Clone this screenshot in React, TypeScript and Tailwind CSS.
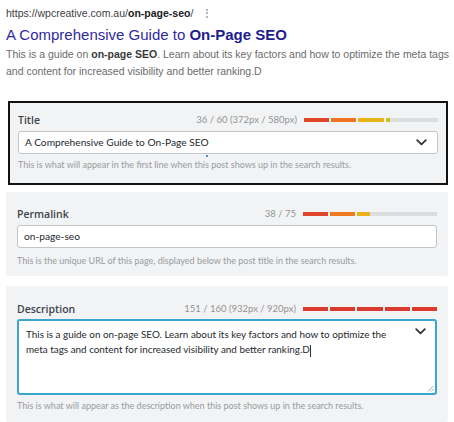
import React from "react";

function SegBar({ fill, colors }: { fill: number; colors: string[] }) {
  // fill is a width in px out of the 134px track
  return (
    <div className="relative w-[134px] h-[4px] bg-[#dcdddf]">
      <div className="absolute left-0 top-0 h-full overflow-hidden bg-[#f2f3f4]" style={{ width: fill }}>
        <div className="flex gap-[2px] h-full w-[134px]">
          {colors.map((c, i) => (
            <div key={i} className="h-full w-[25.2px] shrink-0" style={{ background: c }} />
          ))}
        </div>
      </div>
    </div>
  );
}

function Chevron() {
  return (
    <svg width="11" height="7" viewBox="0 0 11 7" fill="none" stroke="#2c3338" strokeWidth="1.8" strokeLinecap="round" strokeLinejoin="round">
      <path d="M1.2 1.2 5.5 5.3 9.8 1.2" />
    </svg>
  );
}

export default function App() {
  const titleColors = ["#e2452a", "#ef7421", "#e6b318", "#c8c21d", "#dcdddf"];
  const permaColors = ["#e0462b", "#f07a20", "#eab21b", "#dcdddf", "#dcdddf"];
  const descColors = ["#db3b2f", "#db3b2f", "#db3b2f", "#db3b2f", "#db3b2f"];

  return (
    <div className="w-[454px] h-[422px] bg-white overflow-hidden font-['Lato',sans-serif]">
      {/* search preview */}
      <div className="pl-[6px] pt-[6px] font-['Liberation_Sans',Arial,sans-serif]">
        <div className="flex items-center gap-[13px] text-[10.5px] leading-[14px] text-[#3c4043]">
          <span>
            https://wpcreative.com.au/<b className="text-[#202124]">on-page-seo</b>/
          </span>
          <span className="flex flex-col gap-[1.5px]">
            <i className="block w-[2px] h-[2px] rounded-full bg-[#9aa0a6]" />
            <i className="block w-[2px] h-[2px] rounded-full bg-[#9aa0a6]" />
            <i className="block w-[2px] h-[2px] rounded-full bg-[#9aa0a6]" />
          </span>
        </div>
        <div className="mt-[4px] text-[15px] leading-[22px] text-[#2f2a9e]">
          A Comprehensive Guide to <b className="text-[#221d8e]">On-Page SEO</b>
        </div>
        <p className="text-[10.5px] leading-[17px] text-[#6b6b6b] pr-[4px]">
          This is a guide on <b className="text-[#3a3a3a]">on-page SEO</b>. Learn about its key factors and how to optimize the meta tags and content for increased visibility and better ranking.D
        </p>
      </div>

      {/* Title */}
      <div className="ml-[8px] mr-[6px] mt-[21px] border-2 border-[#111] bg-[#f2f3f4] px-[8px] pt-[10px] pb-[11px]">
        <div className="flex items-end justify-between">
          <span className="font-['Open_Sans',sans-serif] text-[10.5px] font-semibold leading-[14px] text-[#3c434a]">Title</span>
          <div className="flex items-center gap-[7px]">
            <span className="text-[9.5px] leading-[14px] text-[#939393]">36 / 60 (372px / 580px)</span>
            <SegBar fill={86} colors={titleColors} />
          </div>
        </div>
        <div className="relative mt-[4px] h-[23px] flex items-center justify-between rounded-[3px] border border-[#c3c4c7] bg-white pl-[6px] pr-[10px]">
          <span className="text-[10.2px] text-[#23282d]">A Comprehensive Guide to On-Page SEO</span>
          <Chevron />
          <span className="absolute left-[187px] top-[23px] w-[2px] h-[2px] rounded-full bg-[#2f5fd0]" />
        </div>
        <p className="mt-[4px] text-[9px] leading-[14px] text-[#989ca1]">
          This is what will appear in the first line when this post shows up in the search results.
        </p>
      </div>

      {/* Permalink */}
      <div className="ml-[6px] mr-[6px] mt-[7px] rounded-[2px] bg-[#f2f3f4] px-[11px] pt-[15px] pb-[8px]">
        <div className="flex items-end justify-between">
          <span className="font-['Open_Sans',sans-serif] text-[10.5px] font-semibold leading-[14px] text-[#3c434a]">Permalink</span>
          <div className="flex items-center gap-[7px]">
            <span className="text-[9.5px] leading-[14px] text-[#939393]">38 / 75</span>
            <SegBar fill={67} colors={permaColors} />
          </div>
        </div>
        <div className="mt-[4px] h-[23px] flex items-center rounded-[3px] border border-[#c3c4c7] bg-white pl-[6px]">
          <span className="text-[10.2px] text-[#23282d]">on-page-seo</span>
        </div>
        <p className="mt-[6px] text-[9px] leading-[14px] text-[#989ca1]">
          This is the unique URL of this page, displayed below the post title in the search results.
        </p>
      </div>

      {/* Description */}
      <div className="ml-[6px] mr-[6px] mt-[10px] rounded-[2px] bg-[#f2f3f4] px-[11px] pt-[16px] pb-[9px]">
        <div className="flex items-end justify-between">
          <span className="font-['Open_Sans',sans-serif] text-[10.5px] font-semibold leading-[14px] text-[#3c434a]">Description</span>
          <div className="flex items-center gap-[7px]">
            <span className="text-[9.5px] leading-[14px] text-[#939393]">151 / 160 (932px / 920px)</span>
            <SegBar fill={134} colors={descColors} />
          </div>
        </div>
        <div className="relative mt-[3px] h-[76px] rounded-[3px] border-2 border-[#3aa5cf] bg-white pl-[7px] pr-[40px] pt-[6px]">
          <p className="text-[9.9px] leading-[15px] text-[#23282d]">
            This is a guide on on-page SEO. Learn about its key factors and how to optimize the meta tags and content for increased visibility and better ranking.D
            <span className="inline-block w-px h-[12px] align-middle bg-[#2c3338]" />
          </p>
          <span className="absolute right-[9px] top-[7px]">
            <Chevron />
          </span>
          <svg className="absolute right-[1px] bottom-[1px]" width="7" height="7" viewBox="0 0 7 7" stroke="#8c8f94" strokeWidth="0.8">
            <path d="M6.5 1 1 6.5M6.5 4 4 6.5" />
          </svg>
        </div>
        <p className="mt-[4px] text-[9px] leading-[14px] text-[#989ca1]">
          This is what will appear as the description when this post shows up in the search results.
        </p>
      </div>
    </div>
  );
}
